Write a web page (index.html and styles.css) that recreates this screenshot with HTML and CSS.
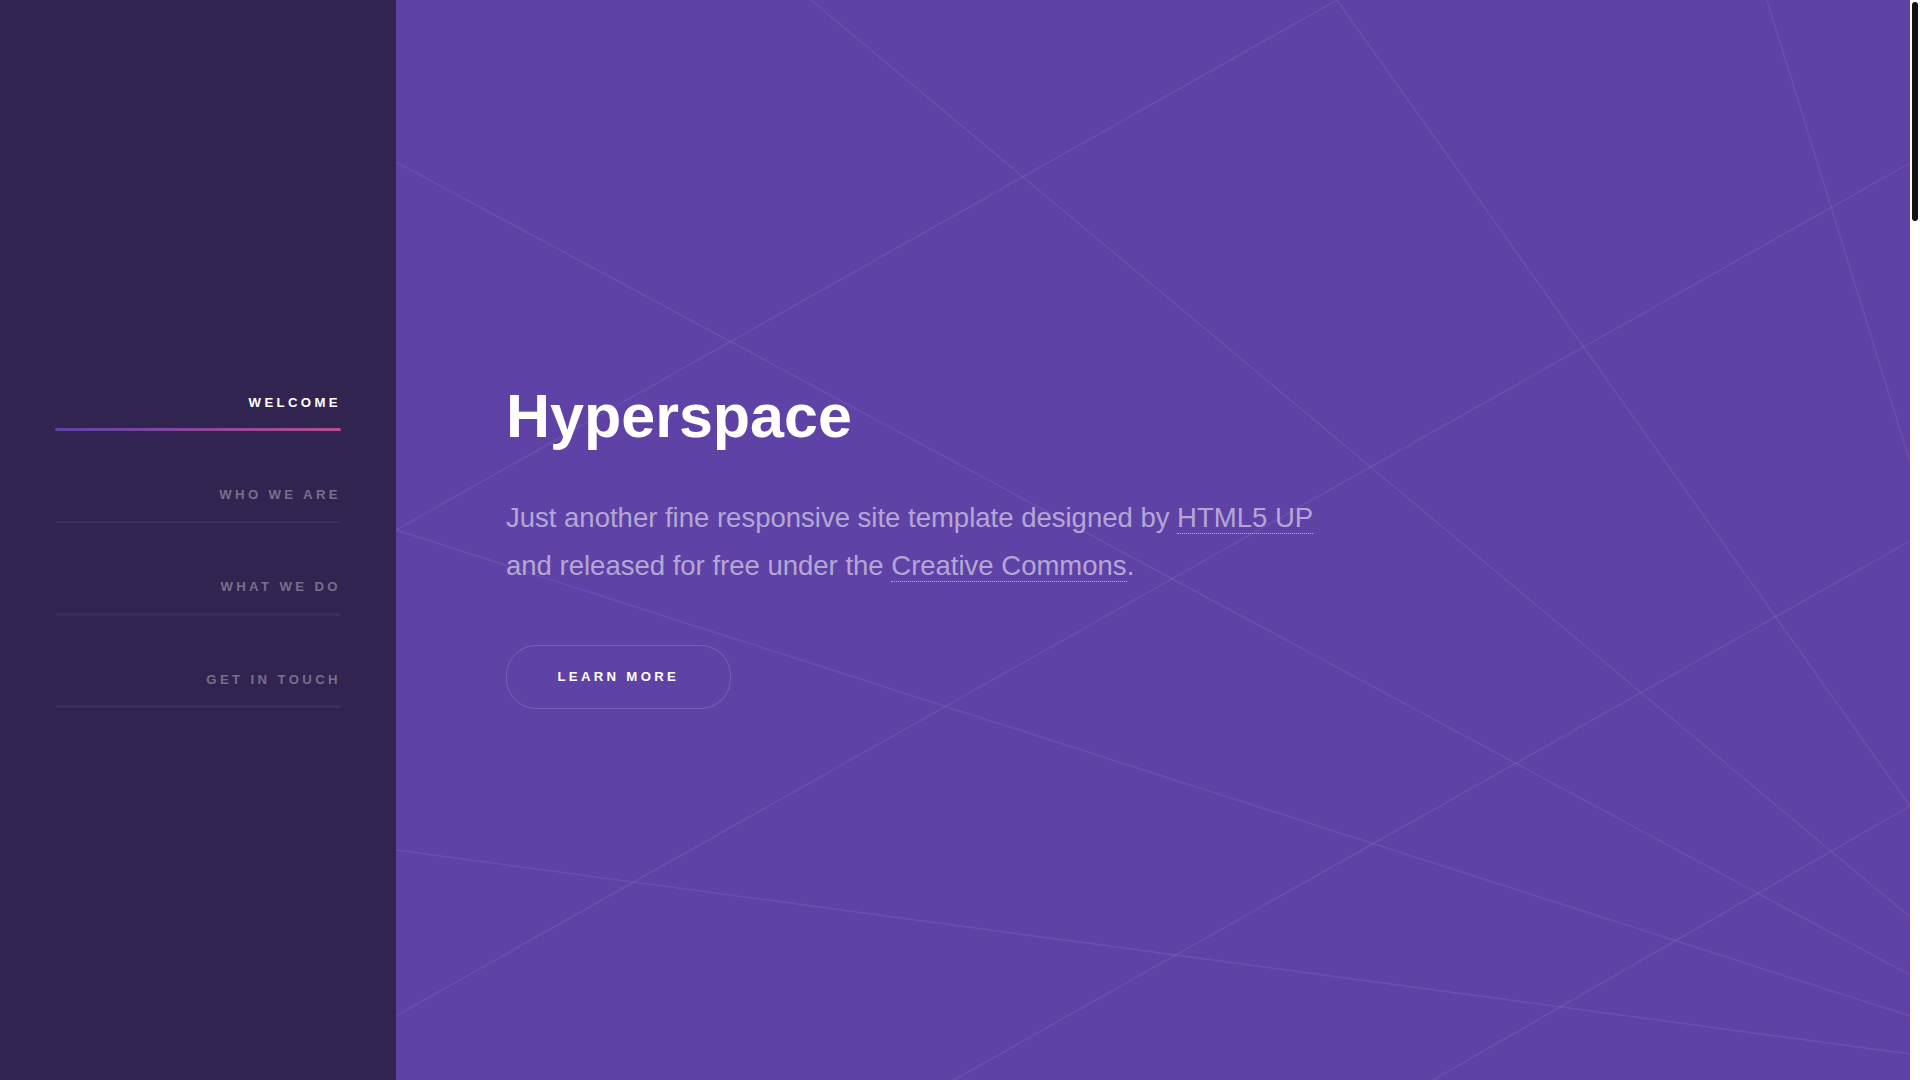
FILE: index.html
```html
<!DOCTYPE html>
<html lang="en">
<head>
<meta charset="utf-8">
<title>Hyperspace by HTML5 UP</title>
<link rel="stylesheet" href="styles.css">
</head>
<body>
<div class="layout">
  <aside class="sidebar">
    <nav class="nav">
      <ul>
        <li><a class="active" href="#intro">Welcome</a></li>
        <li><a href="#one">Who we are</a></li>
        <li><a href="#two">What we do</a></li>
        <li><a href="#three">Get in touch</a></li>
      </ul>
    </nav>
  </aside>

  <main class="wrapper">
    <section class="intro" id="intro">
      <svg class="intro-lines" viewBox="0 0 1514 1080" preserveAspectRatio="none" aria-hidden="true">
        <g fill="none" stroke="#ffffff" stroke-opacity="0.08" stroke-width="1.4">
          <line x1="415" y1="0" x2="1514" y2="917" vector-effect="non-scaling-stroke"/>
          <line x1="941" y1="0" x2="0" y2="530" vector-effect="non-scaling-stroke"/>
          <line x1="941" y1="0" x2="1514" y2="806" vector-effect="non-scaling-stroke"/>
          <line x1="1371" y1="0" x2="1514" y2="462" vector-effect="non-scaling-stroke"/>
          <line x1="0" y1="162" x2="1514" y2="975" vector-effect="non-scaling-stroke"/>
          <line x1="1514" y1="163" x2="0" y2="1016" vector-effect="non-scaling-stroke"/>
          <line x1="0" y1="530" x2="1514" y2="1016" vector-effect="non-scaling-stroke"/>
          <line x1="1514" y1="541" x2="558" y2="1080" vector-effect="non-scaling-stroke"/>
          <line x1="1514" y1="806" x2="1037" y2="1080" vector-effect="non-scaling-stroke"/>
          <line x1="0" y1="850" x2="1514" y2="1054" vector-effect="non-scaling-stroke"/>
        </g>
      </svg>
      <div class="inner">
        <h1>Hyperspace</h1>
        <p>Just another fine responsive site template designed by <a href="#">HTML5 UP</a><br>and released for free under the <a href="#">Creative Commons</a>.</p>
        <ul class="actions">
          <li><a href="#one" class="button">Learn more</a></li>
        </ul>
      </div>
    </section>
  </main>

  <div class="scrollbar" aria-hidden="true">
    <div class="scrollbar-thumb"></div>
  </div>
</div>
</body>
</html>
```

FILE: styles.css
```css
html, body {
  margin: 0;
  padding: 0;
  height: 100%;
  overflow: hidden;
}

body {
  background: #312450;
  color: rgba(255, 255, 255, 0.55);
  font-family: "Liberation Sans", Arial, Helvetica, sans-serif;
  font-size: 22px;
  line-height: 1.75;
}

.layout {
  display: grid;
  grid-template-columns: 396px 1fr 10px;
  height: 100vh;
}

/* Sidebar */
.sidebar {
  background: #312450;
  box-sizing: border-box;
  padding: 0 55px;
  display: flex;
  flex-direction: column;
  justify-content: center;
}

.nav ul {
  list-style: none;
  margin: 0;
  padding: 0;
  text-align: right;
}

.nav li + li {
  margin-top: 33.3px;
}

.nav a {
  display: block;
  position: relative;
  padding: 1.42em 0 1.3em;
  font-size: 13.2px;
  font-weight: bold;
  letter-spacing: 0.255em;
  line-height: 1.75;
  text-transform: uppercase;
  text-decoration: none;
  color: rgba(255, 255, 255, 0.35);
}

.nav a::before,
.nav a::after {
  content: "";
  position: absolute;
  left: 0;
  bottom: 0;
  width: 100%;
  height: 0.2em;
  border-radius: 0.2em;
  background: #3c2c62;
}

.nav a::after {
  max-width: 0;
  background-image: linear-gradient(to right, #5e42a6, #b74e91);
}

.nav a.active {
  color: #ffffff;
}

.nav a.active::after {
  max-width: 100%;
}

/* Main wrapper */
.wrapper {
  min-width: 0;
  background: #5e42a6;
}

.intro {
  position: relative;
  height: 100vh;
  display: flex;
  flex-direction: column;
  justify-content: center;
  overflow: hidden;
}

.intro-lines {
  position: absolute;
  top: 0;
  left: 0;
  width: 100%;
  height: 100%;
}

.inner {
  position: relative;
  padding: 110px 110px 66px;
}

.intro h1 {
  margin: 0 0 31px;
  font-size: 61px;
  line-height: 1.5;
  font-weight: bold;
  color: #ffffff;
}

.intro p {
  margin: 0 0 55px;
  font-size: 27.5px;
  line-height: 1.75;
}

.intro p a {
  color: inherit;
  text-decoration: none;
  border-bottom: 1px dotted;
}

.actions {
  display: flex;
  list-style: none;
  margin: 0 0 44px;
  padding: 0;
}

.button {
  display: block;
  height: 64px;
  line-height: 64px;
  padding: 0 3.9em;
  border-radius: 2.3em;
  box-shadow: inset 0 0 0 1px rgba(255, 255, 255, 0.15);
  font-size: 13.2px;
  font-weight: bold;
  letter-spacing: 0.25em;
  text-transform: uppercase;
  text-decoration: none;
  color: #ffffff;
}

/* Scrollbar strip */
.scrollbar {
  background: #ffffff;
  padding: 2px 2px 0;
}

.scrollbar-thumb {
  height: 219px;
  background: #111111;
  border-radius: 3px;
}
```
